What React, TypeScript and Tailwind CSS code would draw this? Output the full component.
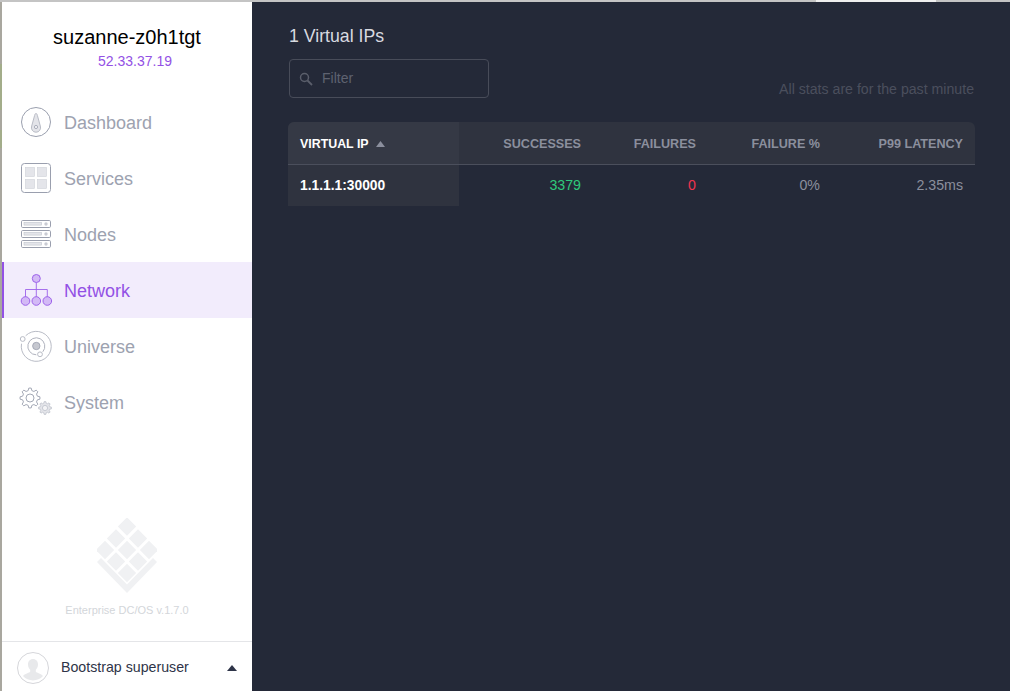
import React from 'react';

const gray = '#9a9fae';

function DashboardIcon() {
  return (
    <svg width="30" height="30" viewBox="0 0 30 30" fill="none">
      <circle cx="15" cy="15" r="14.5" stroke={gray} strokeWidth="1" />
      <path d="M15 6.500c.8 0 1.100.7 1.400 2l2.900 10.500a4.600 4.600 0 1 1-8.600 0l2.900-10.500c.3-1.300.6-2 1.400-2z" fill="#e3e4e9" stroke="#b9bcc6" strokeWidth="1" />
      <circle cx="15" cy="20" r="1.600" fill="#f4f4f6" stroke={gray} strokeWidth="0.8" />
    </svg>
  );
}

function ServicesIcon() {
  return (
    <svg width="30" height="30" viewBox="0 0 30 30" fill="none">
      <rect x="0.5" y="0.5" width="29" height="29" rx="3" stroke={gray} strokeWidth="1" />
      <rect x="4.500" y="4.500" width="9" height="9" fill="#e4e5ea" stroke="#cfd1d8" strokeWidth="0.6" />
      <rect x="16.500" y="4.500" width="9" height="9" fill="#e4e5ea" stroke="#cfd1d8" strokeWidth="0.6" />
      <rect x="4.500" y="16.500" width="9" height="9" fill="#e4e5ea" stroke="#cfd1d8" strokeWidth="0.6" />
      <rect x="16.500" y="16.500" width="9" height="9" fill="#e4e5ea" stroke="#cfd1d8" strokeWidth="0.6" />
    </svg>
  );
}

function NodesIcon() {
  const rows = [0, 10, 20];
  return (
    <svg width="30" height="28" viewBox="0 0 30 28" fill="none">
      {rows.map((y) => (
        <g key={y}>
          <rect x="0.5" y={y + 0.5} width="29" height="7" rx="1.200" stroke={gray} strokeWidth="1" />
          <rect x="3" y={y + 2.500} width="17.500" height="2.600" fill="#e4e5ea" stroke="#bfc2cb" strokeWidth="0.6" />
          <circle cx="25" cy={y + 4} r="1.700" fill="#c9cbd3" />
        </g>
      ))}
    </svg>
  );
}

function NetworkIcon() {
  const stroke = '#9d62ea';
  const fill = '#d3b9f6';
  return (
    <svg width="32" height="32" viewBox="0 0 32 32" fill="none" className="overflow-visible">
      <path d="M15.300 8.500v14.500M4.500 23v-7.500h21.800V23" stroke={stroke} strokeWidth="0.9" />
      <circle cx="15.300" cy="4.500" r="4" fill={fill} stroke={stroke} />
      <circle cx="4.500" cy="27" r="4.300" fill={fill} stroke={stroke} />
      <circle cx="15.300" cy="27" r="4.300" fill={fill} stroke={stroke} />
      <circle cx="26.300" cy="27" r="4.300" fill={fill} stroke={stroke} />
    </svg>
  );
}

function UniverseIcon() {
  return (
    <svg width="32" height="32" viewBox="0 0 32 32" fill="none" className="overflow-visible">
      <path d="M4.700 5.700A15 15 0 1 1 .5 13.700" stroke="#b9bcc6" strokeWidth="1" />
      <path d="M15.300 24.800A8.500 8.500 0 1 1 21.800 21.800" stroke="#b0b3be" strokeWidth="1" />
      <circle cx="15.300" cy="16" r="3.700" fill="#c6c8d0" stroke={gray} strokeWidth="0.8" />
      <circle cx="1.700" cy="9" r="2.400" fill="#fff" stroke="#b9bcc6" strokeWidth="1" />
      <circle cx="19" cy="24.300" r="2.400" fill="#fff" stroke="#b9bcc6" strokeWidth="1" />
    </svg>
  );
}

function Gear({ cx, cy, r, stroke, fill, hole }: { cx: number; cy: number; r: number; stroke: string; fill: string; hole: string }) {
  const teeth = 8;
  const pts: string[] = [];
  for (let i = 0; i < teeth; i++) {
    const a = (i / teeth) * Math.PI * 2;
    const w = Math.PI / teeth / 2;
    const ri = r * 0.76;
    [
      [a - w * 1.25, ri],
      [a - w * 0.6, r],
      [a + w * 0.6, r],
      [a + w * 1.25, ri],
    ].forEach(([t, d]) => pts.push(`${(cx + Math.cos(t) * d).toFixed(2)},${(cy + Math.sin(t) * d).toFixed(2)}`));
  }
  return (
    <g>
      <polygon points={pts.join(' ')} fill={fill} stroke={stroke} strokeWidth="0.9" strokeLinejoin="round" />
      <circle cx={cx} cy={cy} r={r * 0.4} fill={hole} stroke={stroke} strokeWidth="0.9" />
    </g>
  );
}

function SystemIcon() {
  return (
    <svg width="32" height="30" viewBox="0 0 32 30" fill="none" className="overflow-visible">
      <Gear cx={9} cy={11} r={10} stroke={gray} fill="#fff" hole="#fff" />
      <Gear cx={24} cy={21} r={6.500} stroke="#c3c6cf" fill="#e3e4e9" hole="#f4f4f6" />
    </svg>
  );
}

function Logo() {
  const tiles = [
    [30, 8.500], [19, 20.500], [41, 20.500], [8, 32], [30, 32], [52, 32], [19, 43.500], [41, 43.500], [30, 55],
  ];
  return (
    <svg width="60" height="76" viewBox="0 0 60 76" fill="none">
      {tiles.map(([x, y]) => (
        <rect key={`${x}-${y}`} x={x - 6.500} y={y - 6.500} width="13" height="13" fill="#f0f1f3" transform={`rotate(45 ${x} ${y})`} />
      ))}
      <path d="M4 40L30 66.500 56 40 60 44 30 75 0 44z" fill="#f0f1f3" />
    </svg>
  );
}

function NavItem({ icon, label, active }: { icon: React.ReactNode; label: string; active?: boolean }) {
  return (
    <div className={active ? 'flex h-14 items-center border-l-2 border-[#9351e5] bg-[#f2ecfc] pl-[17px]' : 'flex h-14 items-center pl-[19px]'}>
      <div className="flex w-[43px] shrink-0 items-center">{icon}</div>
      <span className={active ? 'pt-[2px] text-lg text-[#9351e5]' : 'pt-[2px] text-lg text-[#9da2b0]'}>{label}</span>
    </div>
  );
}

function Sidebar() {
  return (
    <div className="flex w-[250px] shrink-0 flex-col bg-white">
      <div className="pt-[23px] text-center">
        <div className="text-xl leading-6 text-black">suzanne-z0h1tgt</div>
        <div className="mt-[2px] pl-[16px] text-sm leading-5 text-[#9351e5]">52.33.37.19</div>
      </div>
      <div className="mt-[23px]">
        <NavItem icon={<DashboardIcon />} label="Dashboard" />
        <NavItem icon={<ServicesIcon />} label="Services" />
        <NavItem icon={<NodesIcon />} label="Nodes" />
        <NavItem icon={<NetworkIcon />} label="Network" active />
        <NavItem icon={<UniverseIcon />} label="Universe" />
        <NavItem icon={<SystemIcon />} label="System" />
      </div>
      <div className="flex flex-1 flex-col items-center justify-end pb-[23px]">
        <Logo />
        <div className="mt-[8px] text-[11px] leading-4 text-[#d3d6da]">Enterprise DC/OS v.1.7.0</div>
      </div>
      <div className="flex h-[50px] items-center border-t border-[#e4e5e8] pl-[15px] pr-[15px] pt-[2px]">
        <svg width="32" height="32" viewBox="0 0 32 32" fill="none" className="shrink-0">
          <circle cx="16" cy="16" r="15.500" fill="#fff" stroke="#d5d6da" />
          <path d="M16 7c-3 0-5 2.300-5 5.500 0 2.300 1 4.200 2.200 5.300v2c-1 1.200-5.600 2-7.200 4.200a13.500 13.500 0 0 0 20 0c-1.600-2.200-6.200-3-7.200-4.200v-2c1.200-1.100 2.200-3 2.200-5.300C21 9.300 19 7 16 7z" fill="#e8e9eb" />
        </svg>
        <span className="ml-[12px] flex-1 pt-[1px] text-[14.2px] text-[#2e3448]">Bootstrap superuser</span>
        <svg width="10" height="6" viewBox="0 0 10 6">
          <path d="M5 0l5 6H0z" fill="#2e3448" />
        </svg>
      </div>
    </div>
  );
}

function VipTable() {
  const th = 'text-right text-[12.6px] font-bold text-[#8b8f9d] pr-3';
  const td = 'text-right text-[14.2px] pr-3';
  return (
    <div className="w-[687px]">
      <div className="flex h-[43px] items-center rounded-t-md border-b border-[#4b4f5c] bg-[#2f333f] pt-[2px]">
        <div className="-mt-[2px] flex h-[42px] w-[171px] items-center gap-[7px] rounded-tl-md bg-[#353945] pl-3 pt-[2px] text-[12.4px] font-bold text-white">
          VIRTUAL IP
          <svg width="9" height="6" viewBox="0 0 9 6"><path d="M4.500 0l4.500 6H0z" fill="#8b8f9d" /></svg>
        </div>
        <div className={`w-[134px] ${th}`}>SUCCESSES</div>
        <div className={`w-[115px] ${th}`}>FAILURES</div>
        <div className={`w-[124px] ${th}`}>FAILURE %</div>
        <div className={`w-[143px] ${th}`}>P99 LATENCY</div>
      </div>
      <div className="flex h-[41px] items-center">
        <div className="flex h-full w-[171px] items-center bg-[#2f333f] pl-3 pt-[2px] text-[13.800px] font-bold text-white">1.1.1.1:30000</div>
        <div className={`w-[134px] text-[#2fc97b] ${td}`}>3379</div>
        <div className={`w-[115px] text-[#f0344f] ${td}`}>0</div>
        <div className={`w-[124px] text-[#8b8f9d] ${td}`}>0%</div>
        <div className={`w-[143px] text-[#8b8f9d] ${td}`}>2.35ms</div>
      </div>
    </div>
  );
}

export default function App() {
  return (
    <div className="flex h-[691px] w-full flex-col overflow-hidden bg-[#242938] font-['Liberation_Sans',Arial,sans-serif]">
      {/* sliver of the desktop behind the browser window */}
      <div className="flex h-[2px] shrink-0 bg-[#c4c4c4]">
        <div className="w-[816px]" />
        <div className="w-[120px] bg-[#efefef]" />
      </div>
      <div className="flex min-h-0 flex-1">
        <div className="flex w-[2px] shrink-0 flex-col bg-[#a9a79f]">
          <div className="h-[62px]" />
          <div className="h-[46px] bg-[#a3ad8a]" />
          <div className="h-[20px]" />
          <div className="h-[18px] bg-[#a3ad8a]" />
        </div>
        <Sidebar />
        <div className="flex-1 pl-[36px] pr-[36px] pt-[24px]">
          <div className="pl-[1px] text-[17.700px] leading-5 text-[#d8dae0]">1 Virtual IPs</div>
          <div className="mt-[13px] flex items-end justify-between">
            <div className="ml-[1px] flex h-[39px] w-[200px] items-center rounded-[4px] border border-[#484c59] pl-[9px]">
              <svg width="14" height="14" viewBox="0 0 14 14" fill="none">
                <circle cx="5.500" cy="5.500" r="4" stroke="#5a5e6b" strokeWidth="1.500" />
                <path d="M8.500 8.500L13 13" stroke="#5a5e6b" strokeWidth="1.800" />
              </svg>
              <span className="mb-[2px] ml-[9px] text-sm text-[#5e6270]">Filter</span>
            </div>
            <div className="mb-[1px] mr-[1px] text-[14.150px] leading-4 text-[#4b4f5d]">All stats are for the past minute</div>
          </div>
          <div className="mt-[24px]">
            <VipTable />
          </div>
        </div>
      </div>
    </div>
  );
}
